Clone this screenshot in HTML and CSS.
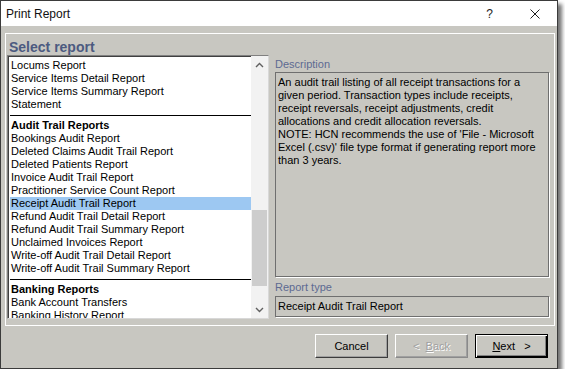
FILE: index.html
```html
<!DOCTYPE html>
<html lang="en">
<head>
    <meta charset="UTF-8">
    <meta name="viewport" content="width=device-width, initial-scale=1.0">
    <title>Print Report</title>
    <link rel="stylesheet" href="styles.css">
</head>
<body>

    <div class="window">
        <div class="titlebar">
            <span class="title">Print Report</span>
            <span class="help">?</span>
            <svg class="close" width="10" height="10" viewBox="0 0 10 10">
                <path d="M0.5 0.5 L9.5 9.5 M9.5 0.5 L0.5 9.5" stroke="#1e1e1e" stroke-width="1" fill="none"/>
            </svg>
        </div>

        <div class="panel">
            <h1>Select report</h1>
            <div class="panel-body">
                <div class="listbox">
                    <ul class="items">
                        <li>Locums Report</li>
                        <li>Service Items Detail Report</li>
                        <li>Service Items Summary Report</li>
                        <li>Statement</li>
                        <li class="sep"></li>
                        <li class="group">Audit Trail Reports</li>
                        <li>Bookings Audit Report</li>
                        <li>Deleted Claims Audit Trail Report</li>
                        <li>Deleted Patients Report</li>
                        <li>Invoice Audit Trail Report</li>
                        <li>Practitioner Service Count Report</li>
                        <li class="selected">Receipt Audit Trail Report</li>
                        <li>Refund Audit Trail Detail Report</li>
                        <li>Refund Audit Trail Summary Report</li>
                        <li>Unclaimed Invoices Report</li>
                        <li>Write-off Audit Trail Detail Report</li>
                        <li>Write-off Audit Trail Summary Report</li>
                        <li class="sep"></li>
                        <li class="group">Banking Reports</li>
                        <li>Bank Account Transfers</li>
                        <li>Banking History Report</li>
                    </ul>
                    <div class="scrollbar">
                        <div class="arrow">
                            <svg width="9" height="6" viewBox="0 0 9 6"><path d="M1 5 L4.5 1.5 L8 5" stroke="#606060" stroke-width="1.4" fill="none"/></svg>
                        </div>
                        <div class="track"><div class="thumb"></div></div>
                        <div class="arrow">
                            <svg width="9" height="6" viewBox="0 0 9 6"><path d="M1 1 L4.5 4.5 L8 1" stroke="#606060" stroke-width="1.4" fill="none"/></svg>
                        </div>
                    </div>
                </div>

                <div class="details">
                    <div class="label">Description</div>
                    <div class="field desc">An audit trail listing of all receipt transactions for a given period. Transaction types include receipts, receipt reversals, receipt adjustments, credit allocations and credit allocation reversals.<br>NOTE: HCN recommends the use of 'File - Microsoft Excel (.csv)' file type format if generating report more than 3 years.</div>
                    <div class="label label-type">Report type</div>
                    <div class="field type">Receipt Audit Trail Report</div>
                </div>
            </div>
        </div>

        <div class="buttons">
            <button class="btn">Cancel</button>
            <button class="btn disabled">&lt;&nbsp;&nbsp;<u>B</u>ack</button>
            <button class="btn default"><u>N</u>ext&nbsp;&nbsp;&nbsp;&gt;</button>
        </div>
    </div>

</body>
</html>
```

FILE: styles.css
```css
body {
    margin: 0;
    background-color: #fff;
    font-family: "Liberation Sans", Arial, sans-serif;
    font-size: 11px;
    color: #000;
}

.window {
    width: 558px;
    height: 369px;
    box-sizing: border-box;
    border: 1px solid #3b3b3b;
    background-color: #c8c7c1;
    box-shadow: 4px 4px 4px rgba(0, 0, 0, 0.55);
}

/* title bar */
.titlebar {
    height: 25px;
    background-color: #fff;
    display: flex;
    align-items: center;
    padding-left: 5px;
}

.title {
    font-size: 12px;
    color: #111;
}

.help {
    margin-left: auto;
    margin-right: 37px;
    font-size: 12px;
    color: #222;
}

.close {
    margin-right: 17px;
    margin-top: 1px;
}

/* main panel */
.panel {
    margin: 7px 2px 0 4px;
    height: 293px;
    box-sizing: border-box;
    border: 1px solid #fff;
    padding: 5px 0 0 1px;
}

.panel h1 {
    margin: 0 0 0 2px;
    font-size: 14px;
    line-height: 16px;
    font-weight: bold;
    color: #4c5a80;
}

.panel-body {
    display: flex;
}

/* report list */
.listbox {
    width: 262px;
    height: 264px;
    box-sizing: border-box;
    border: 1px solid;
    border-color: #808080 #d8d8d8 #d8d8d8 #808080;
    box-shadow: inset 1px 1px 0 #404040;
    background-color: #fff;
    display: flex;
}

.items {
    flex: 1;
    list-style: none;
    margin: 0;
    padding: 3px 0 0 0;
    overflow: hidden;
}

.items li {
    margin-left: 2px;
    padding-left: 1px;
    line-height: 13px;
    height: 13px;
    white-space: nowrap;
}

.items li.group {
    font-weight: bold;
}

.items li.selected {
    background-color: #9dc8f2;
}

.items li.sep {
    height: 1px;
    padding: 0;
    margin: 4px 0 3px 2px;
    background-color: #000;
}

.scrollbar {
    width: 17px;
    background-color: #f2f2f2;
    display: flex;
    flex-direction: column;
}

.arrow {
    height: 17px;
    display: flex;
    align-items: center;
    justify-content: center;
}

.track {
    flex: 1;
}

.thumb {
    margin: 137px 1px 0 1px;
    height: 76px;
    background-color: #cdcdcd;
}

/* description side */
.details {
    width: 274px;
    margin-left: 6px;
    padding-top: 3px;
}

.label {
    line-height: 13px;
    color: #5d6a92;
}

.label-type {
    margin-top: 4px;
}

.field {
    box-sizing: border-box;
    border: 1px solid #6f6f6f;
    box-shadow: 1px 1px 0 #fff;
    line-height: 13px;
    padding: 3px 4px 3px 2px;
}

.desc {
    margin-top: 1px;
    height: 205px;
}

.type {
    margin-top: 2px;
    height: 21px;
}

/* dialog buttons */
.buttons {
    display: flex;
    justify-content: flex-end;
    gap: 7px;
    margin-top: 8px;
    padding-right: 9px;
}

.btn {
    width: 73px;
    height: 24px;
    box-sizing: border-box;
    font-family: "Liberation Sans", Arial, sans-serif;
    font-size: 11px;
    color: #000;
    background-color: #c8c7c1;
    border: 1px solid;
    border-color: #fff #3c3c3c #3c3c3c #fff;
    box-shadow: inset -1px -1px 0 #a0a0a0;
    padding: 0;
}

.btn.disabled {
    color: #a0a0a0;
    text-shadow: 1px 1px 0 #fff;
    border-color: #fff #8a8a8a #8a8a8a #fff;
}

.btn.default {
    border: 1px solid #000;
    box-shadow: inset 1px 1px 0 #fff, inset -1px -1px 0 #000, inset -2px -2px 0 #808080;
}
```
